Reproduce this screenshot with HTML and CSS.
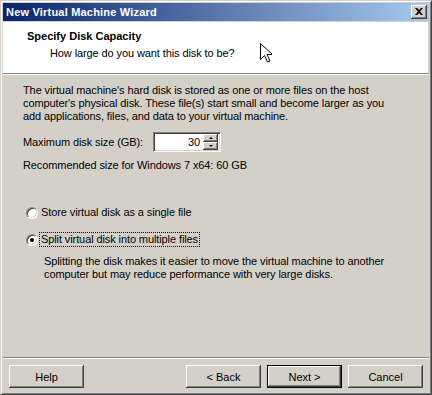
FILE: index.html
```html
<!DOCTYPE html>
<html lang="en">
<head>
    <meta charset="UTF-8">
    <title>New Virtual Machine Wizard</title>
    <link rel="stylesheet" href="styles.css">
</head>
<body>
    <div class="window">
        <div class="titlebar">
            <span class="title">New Virtual Machine Wizard</span>
            <button class="close-btn" aria-label="Close">
                <svg width="8" height="7" viewBox="0 0 8 7">
                    <path d="M0 0h2l2 2 2-2h2L5 3.5 8 7H6L4 5 2 7H0l3-3.5z" fill="#000"/>
                </svg>
            </button>
        </div>

        <div class="header">
            <h1>Specify Disk Capacity</h1>
            <p>How large do you want this disk to be?</p>
            <!-- mouse pointer captured in the shot -->
            <svg class="pointer" width="12" height="20" viewBox="0 0 12 20">
                <path d="M0.5 0.5v16l4-4 3 6.5 2.5-1-3-6.5h5.5z" fill="#fff" stroke="#000" stroke-width="1"/>
            </svg>
        </div>
        <div class="sep"></div>

        <div class="content">
            <p class="intro">
                The virtual machine's hard disk is stored as one or more files on the host<br>
                computer's physical disk. These file(s) start small and become larger as you<br>
                add applications, files, and data to your virtual machine.
            </p>

            <div class="size-row">
                <label class="size-label">Maximum disk size (GB):</label>
                <div class="spinbox">
                    <span class="spin-value">30</span>
                    <div class="spin-buttons">
                        <span class="spin-btn"><i class="arrow-up"></i></span>
                        <span class="spin-btn"><i class="arrow-down"></i></span>
                    </div>
                </div>
            </div>

            <p class="recommend">Recommended size for Windows 7 x64: 60 GB</p>

            <div class="radio-row first">
                <span class="radio"></span>
                <span class="radio-label">Store virtual disk as a single file</span>
            </div>
            <div class="radio-row">
                <span class="radio checked"></span>
                <span class="radio-label focused">Split virtual disk into multiple files</span>
            </div>
            <p class="radio-desc">
                Splitting the disk makes it easier to move the virtual machine to another<br>
                computer but may reduce performance with very large disks.
            </p>
        </div>
        <div class="sep"></div>

        <div class="footer">
            <button class="btn">Help</button>
            <div class="footer-right">
                <button class="btn">&lt; Back</button>
                <button class="btn default">Next &gt;</button>
                <button class="btn">Cancel</button>
            </div>
        </div>
    </div>
</body>
</html>
```

FILE: styles.css
```css
* {
    margin: 0;
    padding: 0;
    box-sizing: border-box;
}

body {
    font-family: "Liberation Sans", Arial, sans-serif;
    font-size: 11px;
    line-height: 13px;
    letter-spacing: -0.1px;
    color: #000;
    background: #d4d0c8;
}

.window {
    width: 432px;
    height: 395px;
    background: #d4d0c8;
    border: 1px solid;
    border-color: #d4d0c8 #404040 #404040 #d4d0c8;
    box-shadow: inset 1px 1px 0 #fff, inset -1px -1px 0 #808080;
    padding: 2px;
    display: flex;
    flex-direction: column;
}

.titlebar {
    height: 18px;
    background: linear-gradient(to right, #0a246a 0%, #a6caf0 100%);
    display: flex;
    align-items: center;
    justify-content: space-between;
    padding: 0 2px 0 2px;
    margin-bottom: 1px;
}

.title {
    color: #fff;
    font-weight: bold;
    font-size: 11px;
    padding-left: 1px;
    letter-spacing: 0.2px;
}

.close-btn {
    width: 16px;
    height: 14px;
    background: #d4d0c8;
    border: none;
    box-shadow: inset -1px -1px 0 #404040, inset 1px 1px 0 #fff, inset -2px -2px 0 #808080;
    display: flex;
    align-items: center;
    justify-content: center;
    padding: 0 1px 1px 0;
}

.header {
    position: relative;
    height: 51px;
    background: #fff;
    padding: 8px 0 0 24px;
    margin-right: 1px;
}

.header h1 {
    font-size: 11px;
    font-weight: bold;
    letter-spacing: 0;
}

.header p {
    margin: 4px 0 0 23px;
}

.pointer {
    position: absolute;
    left: 257px;
    top: 21px;
}

.sep {
    height: 2px;
    border-top: 1px solid #808080;
    border-bottom: 1px solid #fff;
}

.content {
    height: 282px;
    padding: 9px 0 0 20px;
}

.size-row {
    display: flex;
    align-items: center;
    margin-top: 9px;
    height: 20px;
}

.size-label {
    width: 130px;
}

.spinbox {
    width: 68px;
    height: 20px;
    background: #fff;
    border: 1px solid;
    border-color: #808080 #fff #fff #808080;
    box-shadow: inset 1px 1px 0 #404040, inset -1px -1px 0 #d4d0c8;
    display: flex;
    align-items: center;
    padding: 2px 2px 2px 2px;
}

.spin-value {
    flex: 1;
    text-align: right;
    padding-right: 3px;
}

.spin-buttons {
    width: 15px;
    height: 16px;
    display: flex;
    flex-direction: column;
}

.spin-btn {
    flex: 1;
    background: #d4d0c8;
    box-shadow: inset -1px -1px 0 #404040, inset 1px 1px 0 #fff, inset -2px -2px 0 #808080;
    display: flex;
    align-items: center;
    justify-content: center;
}

.arrow-up,
.arrow-down {
    width: 0;
    height: 0;
    border-left: 2px solid transparent;
    border-right: 2px solid transparent;
}

.arrow-up {
    border-bottom: 2px solid #000;
}

.arrow-down {
    border-top: 2px solid #000;
}

.recommend {
    margin-top: 7px;
}

.radio-row {
    display: flex;
    align-items: center;
    margin-top: 12px;
    margin-left: 3px;
}

.radio-row.first {
    margin-top: 33px;
}

.radio {
    position: relative;
    width: 12px;
    height: 12px;
    border-radius: 50%;
    background: #fff;
    border: 1px solid;
    border-color: #808080 #fff #fff #808080;
    box-shadow: inset 1px 1px 0 #404040, inset -1px -1px 0 #d4d0c8;
    margin-right: 1px;
}

.radio.checked::after {
    content: "";
    position: absolute;
    left: 3px;
    top: 3px;
    width: 4px;
    height: 4px;
    border-radius: 50%;
    background: #000;
}

.radio-label {
    border: 1px dotted transparent;
    padding: 0 1px;
}

.radio-label.focused {
    border-color: #000;
}

.radio-desc {
    margin: 8px 0 0 21px;
}

.footer {
    flex: 1;
    display: flex;
    justify-content: space-between;
    padding: 6px 6px 0 6px;
}

.footer-right {
    display: flex;
    gap: 6px;
}

.btn {
    width: 75px;
    height: 23px;
    font-family: "Liberation Sans", Arial, sans-serif;
    font-size: 11px;
    color: #000;
    background: #d4d0c8;
    border: none;
    box-shadow: inset -1px -1px 0 #404040, inset 1px 1px 0 #fff, inset -2px -2px 0 #808080;
}

.btn.default {
    border: 1px solid #000;
}
```
